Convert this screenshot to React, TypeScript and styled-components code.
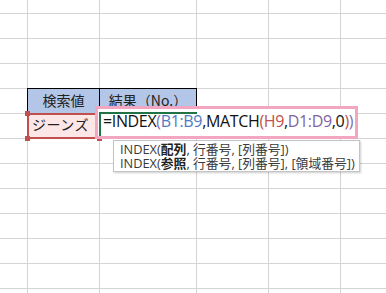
import React from 'react';
import styled, { createGlobalStyle } from 'styled-components';

const Global = createGlobalStyle`
  html, body { margin: 0; padding: 0; background: #fff; overflow: hidden; }
  body { font-family: "Noto Sans CJK JP", sans-serif; }
`;

const Sheet = styled.div`
  position: relative;
  width: 386px;
  height: 293px;
  overflow: hidden;
  display: grid;
  grid-template-columns: 28px 72px 97px 72px 72px 1fr;
  grid-template-rows: 14px repeat(11, 25px) 1fr;
`;

const Cell = styled.div<{ $lastCol?: boolean; $lastRow?: boolean }>`
  box-sizing: border-box;
  border-right: ${(p) => (p.$lastCol ? 'none' : '1px solid #d4d4d4')};
  border-bottom: ${(p) => (p.$lastRow ? 'none' : '1px solid #d4d4d4')};
`;

const HeaderCell = styled.div`
  position: relative;
  z-index: 1;
  box-sizing: border-box;
  margin: -1px 0 0 -1px;
  border: 1px solid #000;
  background: #b4c6e7;
  color: #222;
  font-size: 14px;
  display: flex;
  align-items: center;
  justify-content: center;
  padding: 0 0 3px 0;
  white-space: nowrap;
`;

const RefCell = styled.div`
  position: relative;
  z-index: 1;
  box-sizing: border-box;
  margin: -1px 0 0 -1px;
  border: 2px solid #c0504d;
  background: #fce6e6;
  color: #222;
  font-size: 14px;
  letter-spacing: 0.5px;
  display: flex;
  align-items: center;
  padding: 0 0 4px 3px;
  white-space: nowrap;
`;

const Handle = styled.span<{ $top?: boolean; $left?: boolean }>`
  position: absolute;
  width: 5px;
  height: 5px;
  background: #c0504d;
  ${(p) => (p.$top ? 'top: -4px;' : 'bottom: -4px;')}
  ${(p) => (p.$left ? 'left: -4px;' : 'right: -4px;')}
`;

const Editor = styled.div`
  position: absolute;
  z-index: 2;
  left: 95px;
  top: 106px;
  width: 263px;
  height: 33px;
  box-sizing: border-box;
  border: 3px solid #f2a6c2;
  background: #fff;
  display: flex;
  align-items: center;
  padding: 0 0 3px 5px;
  font-family: "Open Sans", "Noto Sans CJK JP", sans-serif;
  font-size: 16px;
  letter-spacing: -0.35px;
  color: #111;
  white-space: nowrap;
  &::before {
    content: '';
    position: absolute;
    left: 1px;
    top: 3px;
    width: 98px;
    height: 2px;
    background: #217346;
  }
  &::after {
    content: '';
    position: absolute;
    left: 1px;
    top: 3px;
    bottom: 0;
    width: 2px;
    background: #217346;
  }
`;

const Tok = styled.span<{ $c?: string }>`
  color: ${(p) => p.$c || '#111'};
`;

const Tooltip = styled.div`
  position: absolute;
  z-index: 3;
  left: 113px;
  top: 140px;
  width: 247px;
  height: 32px;
  box-sizing: border-box;
  border: 1px solid #c4c4c4;
  background: #fff;
  box-shadow: 1px 1px 2px rgba(0, 0, 0, 0.2);
  padding: 1px 0 0 6px;
  font-family: "Open Sans", "Noto Sans CJK JP", sans-serif;
  font-size: 12.8px;
  color: #3a3a3a;
  white-space: nowrap;
`;

const TipLine = styled.div`
  height: 14px;
  line-height: 14px;
`;

const Bold = styled.b`
  font-weight: 700;
  color: #222;
`;

const COLS = 6;
const ROWS = 13;

export default function App() {
  const cells: React.ReactNode[] = [];
  for (let r = 0; r < ROWS; r++) {
    for (let c = 0; c < COLS; c++) {
      const key = `${r}-${c}`;
      if (r === 4 && c === 1) {
        cells.push(<HeaderCell key={key}>検索値</HeaderCell>);
      } else if (r === 4 && c === 2) {
        cells.push(<HeaderCell key={key}>結果（No.）</HeaderCell>);
      } else if (r === 5 && c === 1) {
        cells.push(
          <RefCell key={key}>
            ジーンズ
            <Handle $top $left />
            <Handle $top />
            <Handle $left />
            <Handle />
          </RefCell>
        );
      } else {
        cells.push(<Cell key={key} $lastCol={c === COLS - 1} $lastRow={r === ROWS - 1} />);
      }
    }
  }
  return (
    <>
      <Global />
      <Sheet>
        {cells}
        <Editor>
          <Tok>=INDEX</Tok>
          <Tok $c="#7a6fb8">(</Tok>
          <Tok $c="#4f7ac4">B1:B9</Tok>
          <Tok>,MATCH</Tok>
          <Tok $c="#c0504d">(</Tok>
          <Tok $c="#c0504d">H9</Tok>
          <Tok>,</Tok>
          <Tok $c="#8064a2">D1:D9</Tok>
          <Tok>,0</Tok>
          <Tok $c="#c0504d">)</Tok>
          <Tok $c="#7a6fb8">)</Tok>
        </Editor>
        <Tooltip>
          <TipLine>
            INDEX(<Bold>配列</Bold>, 行番号, [列番号])
          </TipLine>
          <TipLine>
            INDEX(<Bold>参照</Bold>, 行番号, [列番号], [領域番号])
          </TipLine>
        </Tooltip>
      </Sheet>
    </>
  );
}
